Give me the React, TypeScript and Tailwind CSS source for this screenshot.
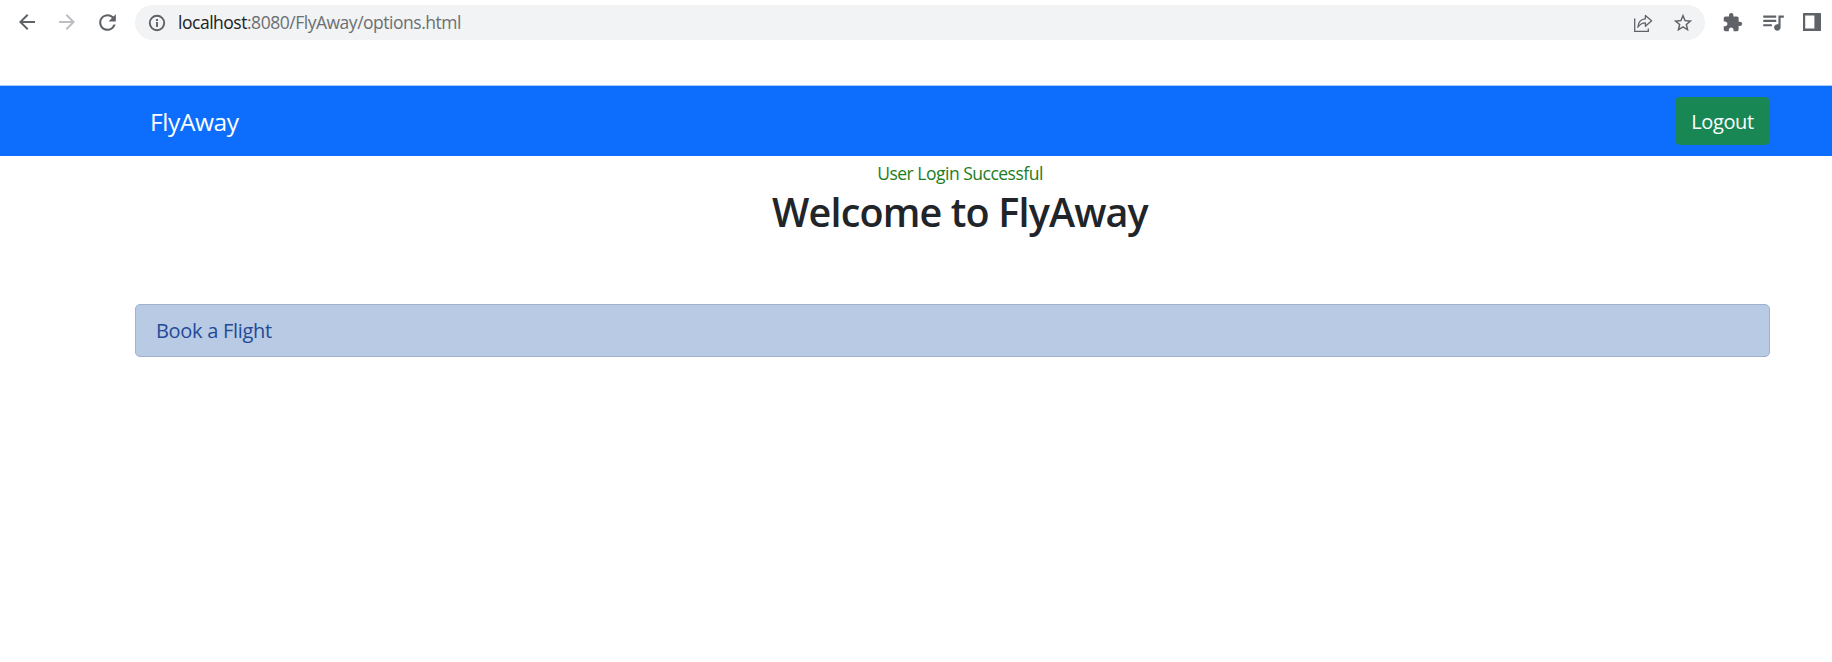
import { MdArrowBack, MdArrowForward, MdExtension, MdQueueMusic, MdRefresh, MdStarBorder } from "react-icons/md";

function InfoIcon() {
  return (
    <svg width="20" height="20" viewBox="0 0 20 20" fill="none" stroke="currentColor" strokeWidth="1.9">
      <circle cx="10" cy="10" r="7.2" />
      <path d="M10 9V14M10 6V7.9" />
    </svg>
  );
}

function ShareIcon() {
  return (
    <svg width="20" height="20" viewBox="0 0 20 20" fill="none" stroke="currentColor" strokeWidth="1.3">
      <path d="M1.7 5.5V18.3H15.3V15.6" />
      <path d="M4.8 14.2C5.4 8.6 8 6 12.4 5.8V2.4L18.6 7.8L12.4 13.2V9.8C9.2 9.8 6.8 11.2 4.8 14.2Z" strokeLinejoin="round" />
    </svg>
  );
}

function SidePanelIcon() {
  return (
    <svg width="18" height="18" viewBox="0 0 18 18" fill="currentColor">
      <path fillRule="evenodd" d="M.6 0H17.4Q18 0 18 .6V17.4Q18 18 17.4 18H.6Q0 18 0 17.4V.6Q0 0 .6 0ZM2.2 2.4V15.6H11.4V2.4Z" />
    </svg>
  );
}

function Toolbar() {
  return (
    <header className="flex h-[44px] items-center pl-[15px] text-[#5f6368]">
      <div className="flex w-[120px] items-center gap-4">
        <MdArrowBack size={24} />
        <MdArrowForward size={24} className="text-[#bcbec1]" />
        <MdRefresh size={25} />
      </div>
      <div className="mt-px flex h-[35px] w-[1570px] items-center rounded-full bg-[#f1f3f4] pl-[12px]">
        <InfoIcon />
        <div className="mb-px ml-[11px] text-[17.5px] leading-6 tracking-[-0.48px] text-[#6b6f73]">
          <span className="text-[#202124]">localhost</span>:8080/FlyAway/options.html
        </div>
        <div className="mr-[11px] ml-auto flex items-center gap-[19px]">
          <ShareIcon />
          <MdStarBorder size={22} />
        </div>
      </div>
      <div className="ml-[17px] flex items-center gap-[17px]">
        <MdExtension size={21} />
        <MdQueueMusic size={26} />
        <SidePanelIcon />
      </div>
    </header>
  );
}

export default function App() {
  return (
    <div className="min-h-[662px] w-full bg-white font-['Open_Sans','Noto_Sans',sans-serif]">
      <Toolbar />
      <nav className="mt-[41px] flex h-[71px] items-center justify-between border-t border-[#a9caff] bg-[#0d6efd] pr-[62px] pl-[150px] text-white">
        <a className="pt-[2px] text-[24.5px] leading-9 tracking-[-0.4px]">FlyAway</a>
        <button className="h-[48px] w-[95px] rounded-[5px] bg-[#198754] pt-px text-[20px] tracking-[-0.4px]">Logout</button>
      </nav>
      <main>
        <div className="flex flex-col items-center pl-[88px]">
          <p className="mt-[4px] text-[17.5px] leading-[27px] tracking-[-0.5px] text-[#1d7d1d]">User Login Successful</p>
          <h1 className="mt-px text-[39.5px] leading-[48px] font-semibold tracking-[-0.85px] text-[#212529]">Welcome to FlyAway</h1>
        </div>
        <div className="mt-[68px] mr-[62px] ml-[135px] flex h-[53px] items-center rounded-[5px] border border-[#a0b1cf] bg-[#b9cae4] pt-px pl-[20px] text-[20px] tracking-[-0.3px] text-[#234a97]">
          <a>Book a Flight</a>
        </div>
      </main>
    </div>
  );
}
